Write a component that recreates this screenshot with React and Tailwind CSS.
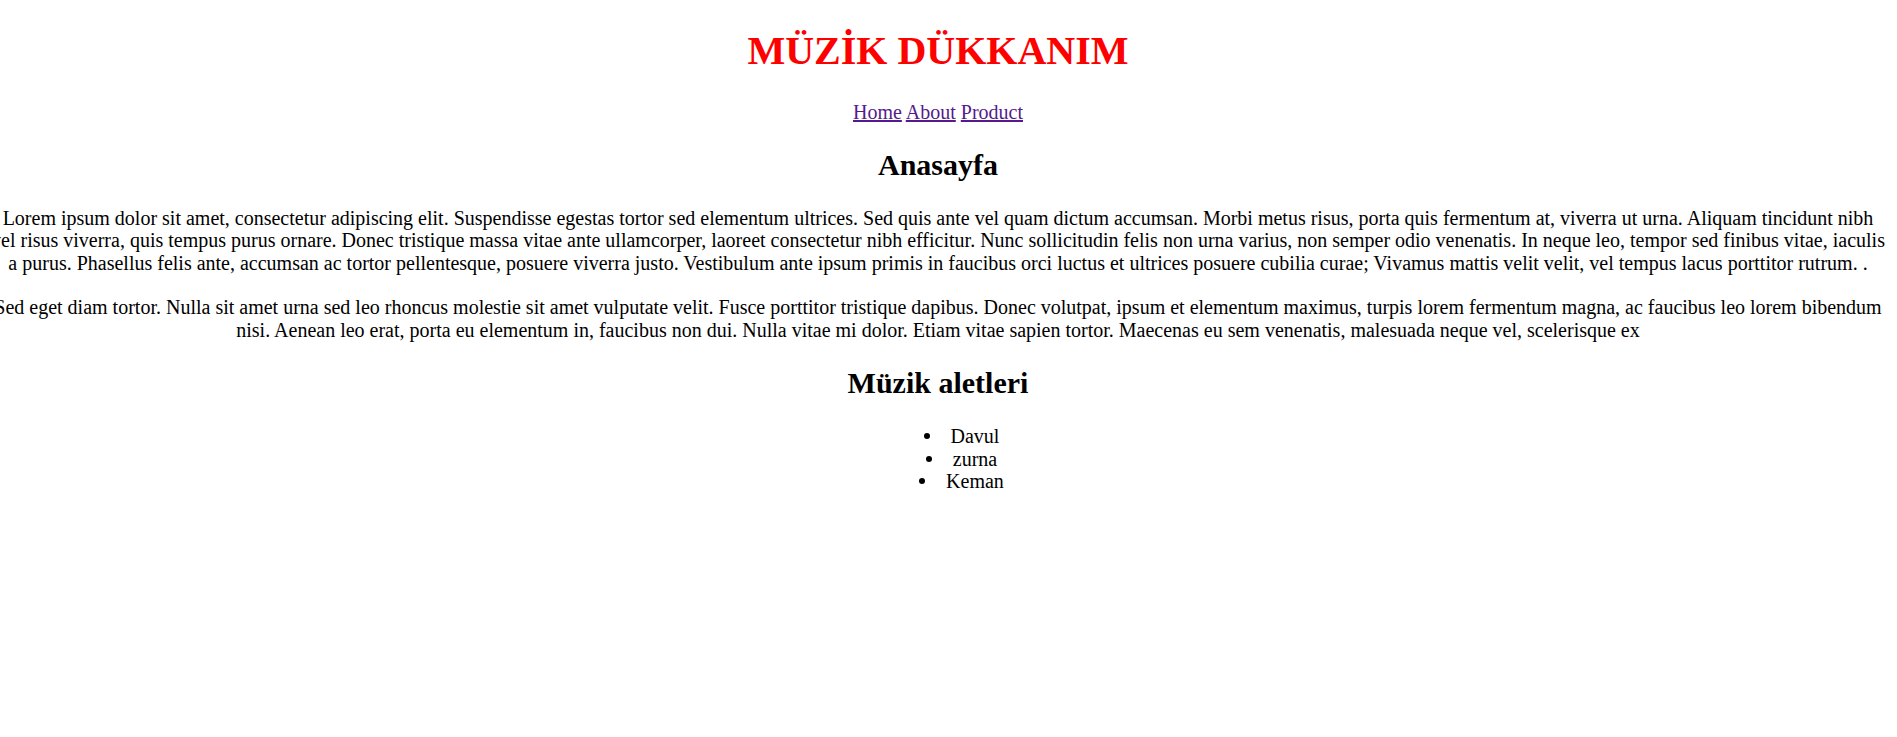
import React from 'react';

const links = ['Home', 'About', 'Product'];

const intro =
  'Lorem ipsum dolor sit amet, consectetur adipiscing elit. Suspendisse egestas tortor sed elementum ultrices. Sed quis ante vel quam dictum accumsan. Morbi metus risus, porta quis fermentum at, viverra ut urna. Aliquam tincidunt nibh vel risus viverra, quis tempus purus ornare. Donec tristique massa vitae ante ullamcorper, laoreet consectetur nibh efficitur. Nunc sollicitudin felis non urna varius, non semper odio venenatis. In neque leo, tempor sed finibus vitae, iaculis a purus. Phasellus felis ante, accumsan ac tortor pellentesque, posuere viverra justo. Vestibulum ante ipsum primis in faucibus orci luctus et ultrices posuere cubilia curae; Vivamus mattis velit velit, vel tempus lacus porttitor rutrum. .';

const second =
  'Sed eget diam tortor. Nulla sit amet urna sed leo rhoncus molestie sit amet vulputate velit. Fusce porttitor tristique dapibus. Donec volutpat, ipsum et elementum maximus, turpis lorem fermentum magna, ac faucibus leo lorem bibendum nisi. Aenean leo erat, porta eu elementum in, faucibus non dui. Nulla vitae mi dolor. Etiam vitae sapien tortor. Maecenas eu sem venenatis, malesuada neque vel, scelerisque ex';

const aletler = ['Davul', 'zurna', 'Keman'];

export default function App() {
  return (
    <div className="min-h-screen bg-white text-black font-['Liberation_Serif','Times_New_Roman',serif] text-[20px] leading-[22.5px] overflow-hidden">
      <div className="w-[1900px] -ml-[12px] text-center">
        <h1 className="mt-[28px] mb-[27px] text-[40px] leading-[46px] font-bold text-[#ff0000]">
          MÜZİK DÜKKANIM
        </h1>

        {/* menü */}
        <div>
          {links.map((l, i) => (
            <React.Fragment key={l}>
              <a href="#" className="text-[#551a8b] underline">{l}</a>
              {i < links.length - 1 && ' '}
            </React.Fragment>
          ))}
        </div>

        <h2 className="mt-[24px] mb-[25px] text-[30px] leading-[34px] font-bold">Anasayfa</h2>
        <p className="my-[22px]">{intro}</p>
        <p className="my-[22px]">{second}</p>

        <h2 className="my-[25px] text-[30px] leading-[34px] font-bold">Müzik aletleri</h2>
        <ul className="my-[20px] pl-[74px]">
          {aletler.map(a => (
            <li key={a}>
              <span className="relative">
                <span className="absolute -left-[27px] top-[8px] w-[6px] h-[6px] rounded-full bg-black" />
                {a}
              </span>
            </li>
          ))}
        </ul>
      </div>
    </div>
  );
}
